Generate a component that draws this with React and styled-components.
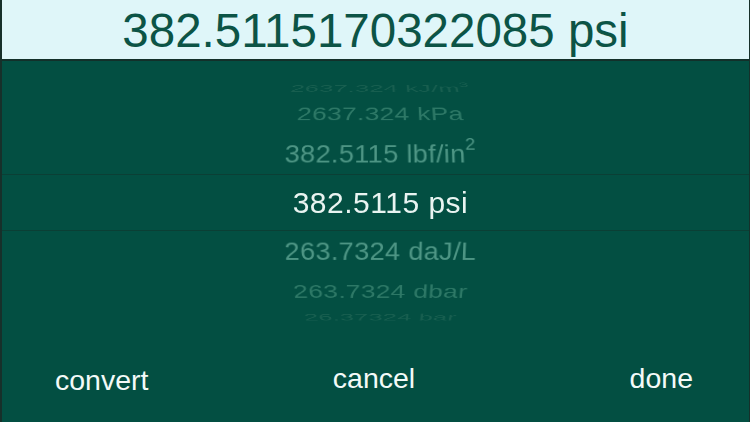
import React from "react";
import styled, { createGlobalStyle } from "styled-components";

const GlobalStyle = createGlobalStyle`
  html, body {
    margin: 0;
    padding: 0;
    background-color: #034f42;
  }
  * {
    box-sizing: border-box;
  }
`;

const Screen = styled.div`
  width: 750px;
  height: 422px;
  display: flex;
  flex-direction: column;
  background-color: #034f42;
  border-left: 2px solid #17302a;
  border-right: 1px solid #17302a;
  font-family: "Liberation Sans", Arial, sans-serif;
  overflow: hidden;
`;

const ResultBar = styled.div`
  height: 61px;
  flex-shrink: 0;
  background-color: #dff6f9;
  border-bottom: 2px solid #13302a;
  color: #0c5446;
  font-size: 47.5px;
  line-height: 59px;
  padding-top: 1px;
  text-align: center;
  white-space: nowrap;
`;

const Wheel = styled.div`
  margin-top: 17px;
  height: 250px;
  flex-shrink: 0;
  display: grid;
  place-items: center;
  overflow: hidden;
`;

const Band = styled.div`
  grid-area: 1 / 1;
  width: 100%;
  height: 57px;
  margin-top: -2px;
  border-top: 1px solid #0b3f35;
  border-bottom: 1px solid #0b3f35;
`;

const Row = styled.div`
  grid-area: 1 / 1;
  width: 100%;
  height: 40px;
  line-height: 40px;
  padding-left: 10px;
  text-align: center;
  white-space: nowrap;
  font-size: ${(p) => (p.$selected ? "30px" : "27.5px")};
  letter-spacing: ${(p) => (p.$selected ? "0.5px" : "0.3px")};
  color: ${(p) => p.$color};
`;

const Sup = styled.span`
  font-size: 0.68em;
  vertical-align: baseline;
  position: relative;
  top: -14px;
  line-height: 1;
`;

const ButtonRow = styled.div`
  flex: 1;
  display: grid;
  grid-template-columns: 1fr auto 1fr;
  align-items: start;
  padding: 35px 56px 0 53px;
`;

const Button = styled.button`
  justify-self: ${(p) => p.$align || "center"};
  border: none;
  background: none;
  padding: 0;
  margin-top: ${(p) => (p.$drop ? "2px" : "0")};
  font-family: inherit;
  font-size: 28.5px;
  line-height: 30px;
  color: #f3faf8;
  cursor: pointer;
`;

const ROWS = [
  { k: -3, value: "2637.324", unit: "kJ/m", sup: "3" },
  { k: -2, value: "2637.324", unit: "kPa" },
  { k: -1, value: "382.5115", unit: "lbf/in", sup: "2" },
  { k: 0, value: "382.5115", unit: "psi" },
  { k: 1, value: "263.7324", unit: "daJ/L" },
  { k: 2, value: "263.7324", unit: "dbar" },
  { k: 3, value: "26.37324", unit: "bar" },
];

const FADE = ["#e9f4f1", "#4d9584", "#2d7866", "#175e4f"];

const STEP = 20;
const RADIUS = 144;

function wheelTransform(k) {
  return `perspective(800px) translateZ(-${RADIUS}px) rotateX(${-k * STEP}deg) translateZ(${RADIUS}px)`;
}

function App() {
  return (
    <>
      <GlobalStyle />
      <Screen>
        <ResultBar>382.5115170322085 psi</ResultBar>
        <Wheel>
          <Band />
          {ROWS.map((row) => (
            <Row
              key={row.k}
              $selected={row.k === 0}
              $color={FADE[Math.abs(row.k)]}
              style={{ transform: wheelTransform(row.k) }}
            >
              {row.value} {row.unit}
              {row.sup && <Sup>{row.sup}</Sup>}
            </Row>
          ))}
        </Wheel>
        <ButtonRow>
          <Button $align="start" $drop>
            convert
          </Button>
          <Button>cancel</Button>
          <Button $align="end">done</Button>
        </ButtonRow>
      </Screen>
    </>
  );
}

export default App;
